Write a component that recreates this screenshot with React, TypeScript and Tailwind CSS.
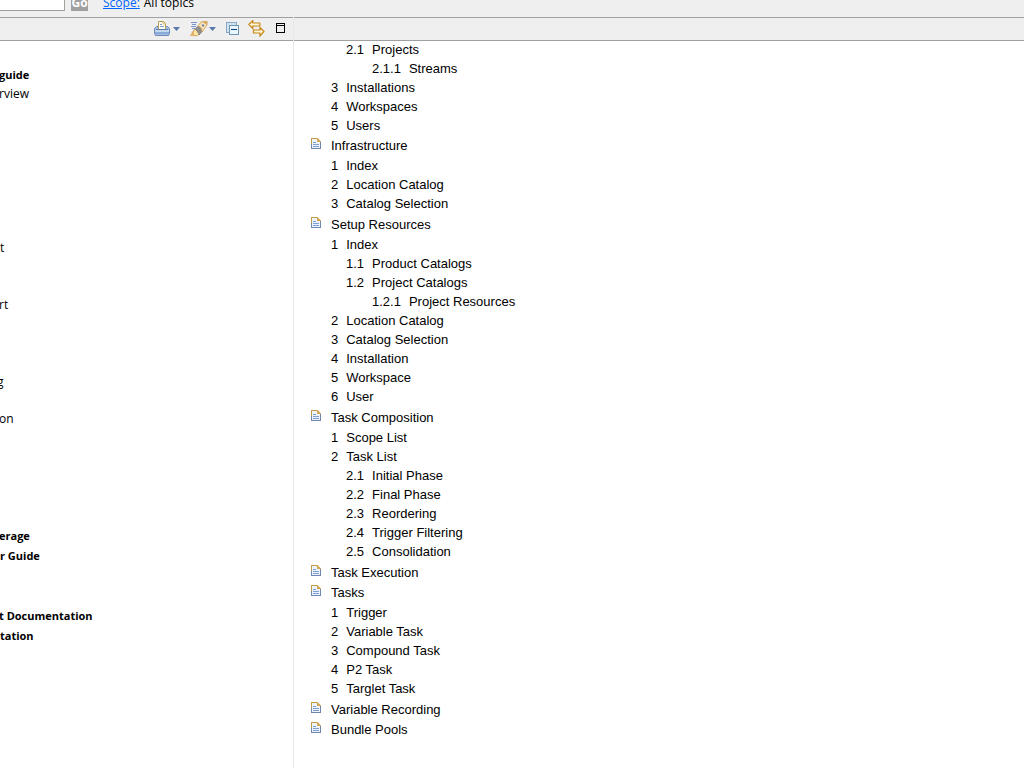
import React from "react";

type Topic = { n: string; label: string; children?: Topic[] };
type Section = { label: string; topics?: Topic[] };

const leading: Topic[] = [
  { n: "3", label: "Installations" },
  { n: "4", label: "Workspaces" },
  { n: "5", label: "Users" },
];

const nestedLeading: Topic[] = [
  { n: "2.1", label: "Projects", children: [{ n: "2.1.1", label: "Streams" }] },
];

const sections: Section[] = [
  {
    label: "Infrastructure",
    topics: [
      { n: "1", label: "Index" },
      { n: "2", label: "Location Catalog" },
      { n: "3", label: "Catalog Selection" },
    ],
  },
  {
    label: "Setup Resources",
    topics: [
      {
        n: "1",
        label: "Index",
        children: [
          { n: "1.1", label: "Product Catalogs" },
          {
            n: "1.2",
            label: "Project Catalogs",
            children: [{ n: "1.2.1", label: "Project Resources" }],
          },
        ],
      },
      { n: "2", label: "Location Catalog" },
      { n: "3", label: "Catalog Selection" },
      { n: "4", label: "Installation" },
      { n: "5", label: "Workspace" },
      { n: "6", label: "User" },
    ],
  },
  {
    label: "Task Composition",
    topics: [
      { n: "1", label: "Scope List" },
      {
        n: "2",
        label: "Task List",
        children: [
          { n: "2.1", label: "Initial Phase" },
          { n: "2.2", label: "Final Phase" },
          { n: "2.3", label: "Reordering" },
          { n: "2.4", label: "Trigger Filtering" },
          { n: "2.5", label: "Consolidation" },
        ],
      },
    ],
  },
  { label: "Task Execution" },
  {
    label: "Tasks",
    topics: [
      { n: "1", label: "Trigger" },
      { n: "2", label: "Variable Task" },
      { n: "3", label: "Compound Task" },
      { n: "4", label: "P2 Task" },
      { n: "5", label: "Targlet Task" },
    ],
  },
  { label: "Variable Recording" },
  { label: "Bundle Pools" },
];

const indents = ["pl-0", "pl-[15px]", "pl-[26px]"];

function TopicList({ topics, depth = 0 }: { topics: Topic[]; depth?: number }) {
  return (
    <ol className={indents[depth]}>
      {topics.map((t) => (
        <li key={t.n}>
          <div className="flex gap-2 whitespace-nowrap leading-[19px]">
            <span>{t.n}</span>
            <a href="#topic">{t.label}</a>
          </div>
          {t.children && <TopicList topics={t.children} depth={depth + 1} />}
        </li>
      ))}
    </ol>
  );
}

function DocIcon() {
  return (
    <svg width="10" height="12" viewBox="0 0 10 12" shapeRendering="crispEdges" aria-hidden="true">
      <path d="M1 1h5l3 3v6H1z" fill="#edf3fc" />
      <path d="M0 0h6v1H1v5H0z" fill="#c49a4a" />
      <path d="M0 6h1v4h8V4h1v7H0z" fill="#7187b0" />
      <path d="M6 0h1v1h1v1h1v1h1v1H6z" fill="#d4a753" />
      <path d="M2 4h3v1H2zM2 6h6v1H2zM2 8h6v1H2z" fill="#7d9fd6" />
    </svg>
  );
}

function PrintIcon() {
  return (
    <svg width="16" height="16" viewBox="0 0 16 16" aria-hidden="true">
      <path d="M2.500 5.500h11l2 2v5l-1 2h-13l-1-2v-5z" fill="#a5bde2" stroke="#7189b8" />
      <path d="M1 9h14v2H1z" fill="#c4d8f1" />
      <path d="M1 11h14v2H1z" fill="#8aaad8" />
      <path d="M4.500 8.500v-8h5l2 2v6z" fill="#fffef4" stroke="#b89b50" />
      <path d="M9 .5v2.500h2.500" fill="none" stroke="#d5ba74" />
      <path d="M6 3.500h2M6 5.500h4" stroke="#7d9dcc" />
      <path d="M2 8.500h12" stroke="#5f7bac" />
    </svg>
  );
}

function RocketIcon() {
  return (
    <svg width="18" height="16" viewBox="0 0 18 16" aria-hidden="true">
      <path d="M1 1.500h6M2 3.500h4M1 5.500h5M2 7.500h3" stroke="#7895ce" />
      <path d="M4 9 0 15l2-1 1 1 4-1z" fill="#f0b45c" stroke="#d9a465" strokeWidth=".6" />
      <path d="m3 11 2-3 5 5-4 2c-2 0-3-2-3-4z" fill="#ffe6a0" stroke="#b99150" strokeWidth=".7" />
      <path d="m5 8 3-3c3 0 4 3 4 6l-3 3c-1-3-2-4-4-6z" fill="#918f8d" stroke="#76716a" strokeWidth=".5" />
      <path d="m8 5 3-4 6-1v4l-5 7c0-3-1-5-4-6z" fill="#fae4b4" stroke="#c79b54" strokeWidth=".8" />
      <path d="m13 1 4-1v4z" fill="#dca253" />
      <circle cx="13" cy="4.500" r="1.200" fill="#7089b5" />
    </svg>
  );
}

function CollapseIcon() {
  return (
    <svg width="14" height="14" viewBox="0 0 14 14" shapeRendering="crispEdges" aria-hidden="true">
      <path d="M.5.5h10v10H.5z" fill="#d1e2ef" stroke="#88a8c5" />
      <path d="M3.500 3.500h9v9h-9z" fill="#e7f6ff" stroke="#7193b2" />
      <path d="M5 7h6v1H5z" fill="#06427f" />
    </svg>
  );
}

function SyncIcon() {
  return (
    <svg width="17" height="17" viewBox="0 0 17 17" aria-hidden="true">
      <g fill="#fff5d8" stroke="#c58719" strokeWidth="1.200">
        <path d="m.8 4.500 4-4v2.500h7v3h-7v2.500z" />
        <path d="m16 11.500-4-4V10H5.500v3H12v3z" />
      </g>
    </svg>
  );
}

function MaximizeIcon() {
  return (
    <svg width="9" height="11" viewBox="0 0 9 11" shapeRendering="crispEdges" aria-hidden="true">
      <path d="M.5.5h8v9h-8zM0 2.500h9" fill="none" stroke="#000" />
    </svg>
  );
}

function Caret() {
  return (
    <svg width="7" height="4" viewBox="0 0 7 4" aria-hidden="true">
      <path d="M0 0h7L3.500 4z" fill="#5877ad" />
    </svg>
  );
}

const contents = [
  { label: "guide", style: "mt-[24px] -ml-px text-[11px] font-bold" },
  { label: "rview", style: "-ml-px" },
  { label: "t", style: "mt-[135px]" },
  { label: "rt", style: "mt-[38px] -ml-px" },
  { label: "g", style: "mt-[58px] -ml-[3px]" },
  { label: "on", style: "mt-[18px] -ml-px" },
  { label: "erage", style: "mt-[98px] -ml-px text-[11px] font-bold" },
  { label: "r Guide", style: "mt-px text-[11px] font-bold" },
  { label: "t Documentation", style: "mt-[41px] -ml-px text-[11px] font-bold" },
  { label: "tation", style: "mt-px text-[11px] font-bold" },
];

export default function App() {
  return (
    <div className="flex h-screen flex-col overflow-hidden bg-white text-[12px] text-black [font-family:'Open_Sans',sans-serif]">
      <form className="flex h-[17px] shrink-0 items-end bg-[#efefef]">
        <input
          aria-label="Search"
          className="mb-[6px] h-[22px] w-[65px] shrink-0 border border-l-0 border-[#a0a0a0] bg-white outline-none"
        />
        <button
          type="button"
          className="mb-[6px] ml-[6px] h-[18px] w-[17px] bg-[#a0a0a0] text-center font-bold leading-[20px] text-white"
        >
          Go
        </button>
        <a href="#scope" className="mb-[5px] ml-[15px] leading-[18px] text-[#0066ff] underline">
          Scope:
        </a>
        <span className="mb-[5px] ml-1 leading-[18px]">All topics</span>
      </form>
      <div className="flex min-h-0 flex-1">
        <aside className="flex w-[293px] shrink-0 flex-col overflow-hidden">
          <div className="flex h-[24px] shrink-0 items-center justify-end border-y border-[#a0a0a0] bg-[#efefef] pb-px pr-[8px]">
            <button type="button" aria-label="Print" className="flex items-center gap-[3px]">
              <PrintIcon />
              <Caret />
            </button>
            <button type="button" aria-label="Search topics" className="ml-[10px] flex items-center gap-px">
              <RocketIcon />
              <Caret />
            </button>
            <button type="button" aria-label="Collapse all" className="ml-[10px]">
              <CollapseIcon />
            </button>
            <button type="button" aria-label="Link with contents" className="ml-[8px]">
              <SyncIcon />
            </button>
            <button type="button" aria-label="Maximize" className="ml-[11px]">
              <MaximizeIcon />
            </button>
          </div>
          <ul>
            {contents.map((c) => (
              <li key={c.label} className={`whitespace-nowrap leading-[19px] ${c.style}`}>
                <a href="#contents">{c.label}</a>
              </li>
            ))}
          </ul>
        </aside>
        <main className="flex min-w-0 flex-1 flex-col border-l border-[#e8e8e8]">
          <div className="h-[24px] shrink-0 border-y border-[#a0a0a0] bg-[#efefef]" />
          <div className="min-h-0 flex-1 overflow-hidden pl-[37px] text-[13px] [font-family:'Liberation_Sans',Arial,sans-serif]">
            <div className="-mt-px pb-px">
              <TopicList topics={nestedLeading} depth={1} />
              <TopicList topics={leading} />
            </div>
            {sections.map((s) => (
              <section key={s.label}>
                <h2 className="-ml-5 flex h-[20px] gap-[10px] pt-[2px] leading-[15px]">
                  <DocIcon />
                  <a href="#section">{s.label}</a>
                </h2>
                {s.topics && (
                  <div className="pb-[2px]">
                    <TopicList topics={s.topics} />
                  </div>
                )}
              </section>
            ))}
          </div>
        </main>
      </div>
    </div>
  );
}
